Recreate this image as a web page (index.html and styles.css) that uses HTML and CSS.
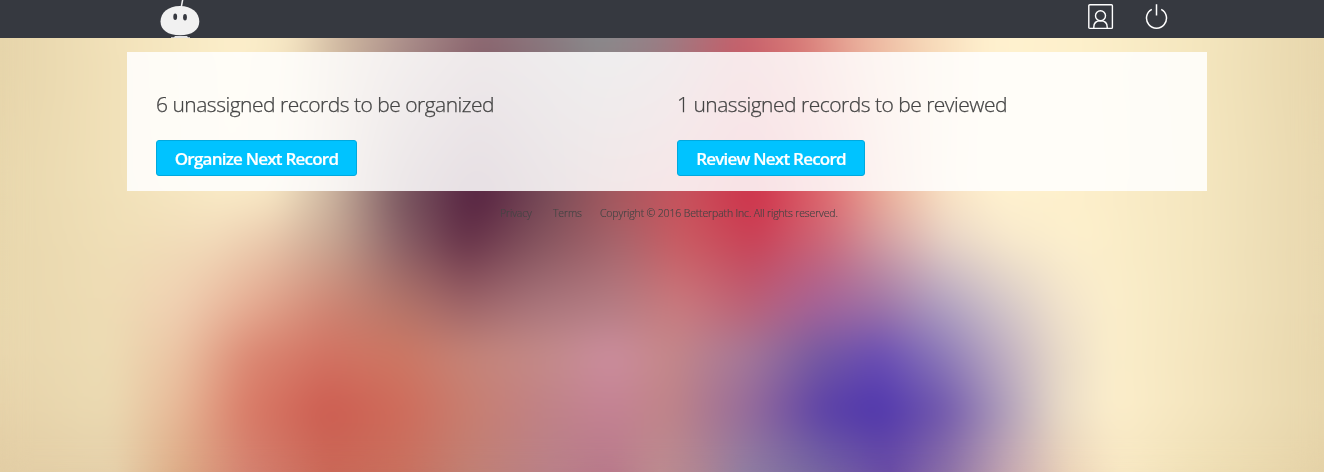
FILE: index.html
```html
<!DOCTYPE html>
<html lang="en">
<head>
<meta charset="utf-8">
<title>Betterpath</title>
<link rel="stylesheet" href="styles.css">
</head>
<body>
<div class="backdrop"><i class="band b1"></i><i class="band b2"></i><i class="band b3"></i><i class="band b4"></i><i class="band b5"></i><i class="band b6"></i><i class="band b7"></i></div>
<header class="topbar">
  <div class="bar-inner">
    <a class="logo"><svg width="42" height="38" viewBox="0 0 42 38">
      <path d="M22.300 7 L23.800 -1" stroke="#f1f1f1" stroke-width="1.500"/>
      <path d="M12 38V37.200H15L16 36H28L29 37.200H31V38Z" fill="#e4e4e5"/>
      <path d="M21 6C33 6 40.300 13 40.300 21.500C40.300 30 33 35.300 21 35.300S1.500 30 1.500 21.500C1.500 13 9 6 21 6Z" fill="#f1f1f1"/>
      <ellipse cx="16.200" cy="16.800" rx="1.900" ry="3.200" fill="#363940"/><ellipse cx="26" cy="17.200" rx="1.900" ry="3.200" fill="#363940"/>
    </svg></a>
    <nav class="actions">
      <svg width="26" height="26" viewBox="0 0 26 26" fill="none" stroke="#fff" stroke-width="1.400"><rect x=".8" y=".8" width="23.600" height="23.600" rx="1"/><circle cx="12.500" cy="11.700" r="5"/><path d="M5.800 24.400V23C5.800 19 8.500 16.700 12.500 16.700S19.200 19 19.200 23V24.400"/></svg>
      <svg width="24" height="26" viewBox="0 0 24 26" fill="none" stroke="#fff" stroke-width="1.500"><path d="M11.500 .3V11.500M6.800 5.300A10 10 0 1 0 16.200 5.300"/></svg>
    </nav>
  </div>
</header>
<main class="card">
  <section class="queue"><h2>6 unassigned records to be organized</h2><button class="btn organize">Organize Next Record</button></section>
  <section class="queue"><h2>1 unassigned records to be reviewed</h2><button class="btn review">Review Next Record</button></section>
</main>
<footer class="footer"><a class="privacy">Privacy</a><a class="terms">Terms</a><span>Copyright © 2016 Betterpath Inc. All rights reserved.</span></footer>
</body>
</html>
```
FILE: styles.css
```css
* { box-sizing: border-box; }
body { margin: 0; height: 472px; overflow: hidden; font-family: "Open Sans", "Noto Sans", sans-serif; color: #444; }

/* Backdrop: horizontal colour bands that fade into one another */
.backdrop { position: absolute; inset: 0; z-index: -1; overflow: hidden; }
.backdrop::after { content: ""; position: absolute; inset: 0; -webkit-backdrop-filter: blur(14px); backdrop-filter: blur(14px); }
.band { position: absolute; left: 0; right: 0; bottom: 0; -webkit-mask-image: linear-gradient(transparent, #000 var(--fade)); mask-image: linear-gradient(transparent, #000 var(--fade)); }
.b1 { top: 0; -webkit-mask-image: none; mask-image: none; background: linear-gradient(90deg, #e6d4aa 0, #f2e2ba 120px, #fcefcb 240px, #f5e5c2 290px, #d0b9a1 340px, #a98c89 410px, #8c6770 480px, #8a7a80 550px, #898b8d 600px, #977f86 660px, #c5606b 740px, #d77b78 800px, #eab09c 860px, #f5d5b5 920px, #fff1cf 990px, #fdf0cb 1080px, #f4e6be 1200px, #e7d6ac 1324px); }
.b2 { --fade: 148px; top: 45px; background: linear-gradient(90deg, #e8d7ad 0, #f1e1b9 120px, #faebc7 230px, #f7e7c4 275px, #c9b19d 335px, #795760 400px, #531f3f 475px, #774b57 550px, #a2565c 610px, #c7525c 680px, #cf3049 755px, #df6c70 830px, #ecb39d 890px, #f9e2c4 945px, #fff2d0 1000px, #fdefcb 1080px, #f4e6bf 1200px, #e8d7ae 1324px); }
.b3 { --fade: 47px; top: 193px; background: linear-gradient(90deg, #e8d7ad 0, #f0dfb7 120px, #f2dbba 210px, #e9c8ac 270px, #c2a08e 340px, #8b6268 400px, #653148 465px, #85545e 540px, #a8646b 620px, #ca5b62 680px, #ca4055 755px, #cd6c7c 830px, #d29ba0 880px, #e8d5c7 950px, #f8e9cc 1010px, #fdf0cc 1080px, #f4e6bf 1200px, #e8d7ae 1324px); }
.b4 { --fade: 70px; top: 240px; background: linear-gradient(90deg, #e8d7ad 0, #eedcb4 110px, #efceb0 180px, #e5a990 250px, #d08573 325px, #b77669 400px, #a2686a 465px, #ac777d 540px, #b57e85 610px, #c97b7f 680px, #bb6478 745px, #a1629a 820px, #9a70a7 880px, #aa9abf 940px, #cec1c7 1000px, #f0e1cb 1060px, #fbeecb 1110px, #f4e6bf 1200px, #e8d7ae 1324px); }
.b5 { --fade: 45px; top: 310px; background: linear-gradient(90deg, #e8d6ad 0, #eddcb4 110px, #ebc3a3 180px, #db8873 250px, #d27262 325px, #cd7763 400px, #c58478 470px, #c48b8b 550px, #cc8e9f 610px, #c58889 670px, #a37799 750px, #7459a2 820px, #684cb5 880px, #8a77b8 940px, #bbaac0 1000px, #e8dac8 1060px, #fbeecb 1110px, #f4e5be 1200px, #e7d6ac 1324px); }
.b6 { --fade: 55px; top: 355px; background: linear-gradient(90deg, #e6d2a9 0, #ebdab2 110px, #e7b796 180px, #d97c68 245px, #cd5c50 325px, #cf6b5a 400px, #c87e70 470px, #c08288 550px, #c48294 610px, #c08488 670px, #946a9b 750px, #593fa8 825px, #4e35ad 880px, #7057ad 945px, #a998b9 1000px, #e8dac6 1060px, #fceecb 1110px, #f4e5be 1200px, #e7d6ac 1324px); }
.b7 { --fade: 62px; top: 410px; background: linear-gradient(90deg, #e2cda4 0, #e5d0aa 115px, #dcaa85 180px, #d38170 250px, #c96857 330px, #c8705e 400px, #c08074 470px, #b88088 550px, #b7788a 610px, #bc8c90 660px, #ae8694 700px, #8f7fa2 745px, #7a6ba0 810px, #6a4ca4 890px, #9074a6 950px, #c7a9b0 1010px, #ecd4b8 1070px, #f7e7c3 1120px, #efdfb5 1200px, #e4d1a6 1324px); }

.topbar { height: 38px; background: #363940; }
.bar-inner { width: 1080px; margin: 0 auto 0 127px; padding: 0 38px 0 32px; display: flex; justify-content: space-between; }
.logo svg, .actions svg { display: block; }
.actions { display: flex; gap: 31px; padding-top: 4px; }

.card { width: 1080px; height: 139px; margin: 14px 0 0 127px; padding: 37px 0 0 29px; display: grid; grid-template-columns: 521px 1fr; background: rgba(255,255,255,.86); }
h2 { margin: 0 0 21px; width: max-content; font-size: 21px; line-height: 30px; font-weight: 300; letter-spacing: -.5px; -webkit-text-stroke: .25px #444; white-space: nowrap; }
.btn { display: block; height: 36px; padding: 1px 0 0; border: 1px solid #00a9de; border-radius: 3px; background: #00c3ff; color: #fff; font: 600 17px/33px "Open Sans", sans-serif; letter-spacing: -.77px; -webkit-text-stroke: .2px #fff; white-space: nowrap; }
.organize { width: 201px; }
.review { width: 188px; }
.footer { display: flex; margin: 14px 0 0 500px; font-size: 10.500px; line-height: 16px; font-weight: 300; letter-spacing: -.15px; -webkit-text-stroke: .15px #444; white-space: nowrap; }
.privacy { width: 53px; }
.terms { width: 47px; }
```
